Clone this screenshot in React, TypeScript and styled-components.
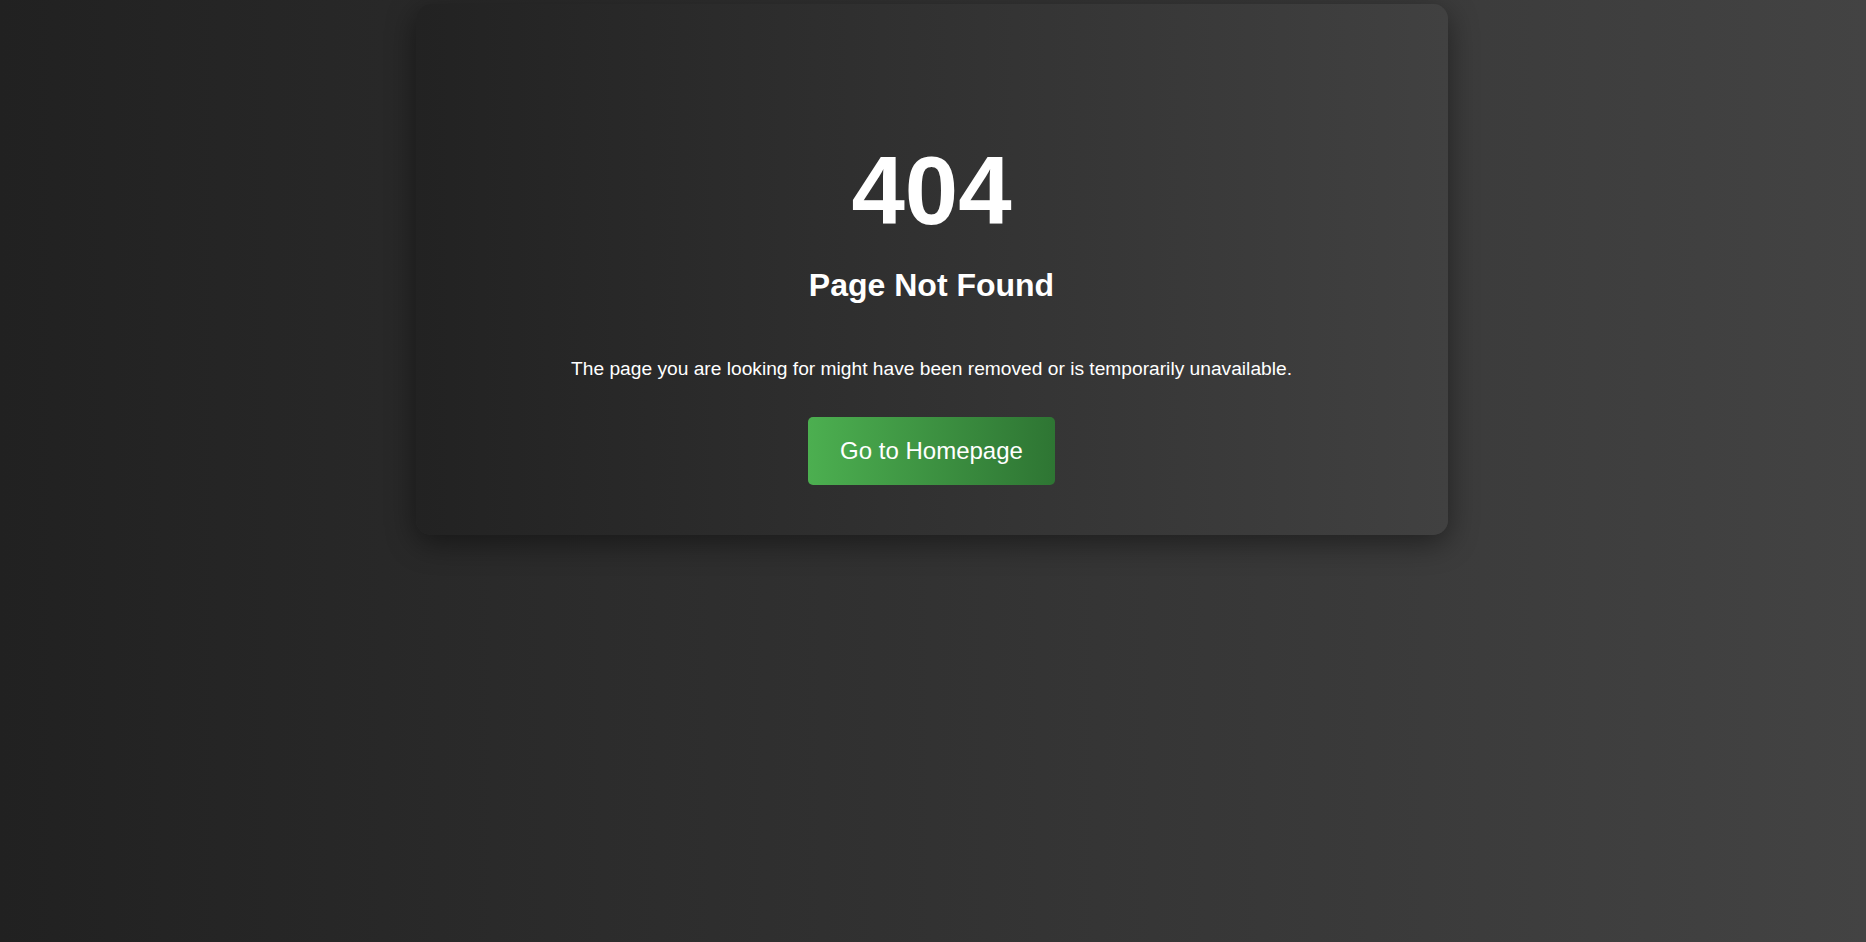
import React from "react";
import styled, { createGlobalStyle } from "styled-components";

const GlobalStyle = createGlobalStyle`
  html, body {
    margin: 0;
    padding: 0;
    height: 100%;
  }
  body {
    font-family: "Liberation Sans", Arial, sans-serif;
    background: linear-gradient(to right, #212121, #434343);
    color: #ffffff;
    min-height: 942px;
  }
`;

const Page = styled.main`
  display: flex;
  justify-content: center;
  align-items: flex-start;
  min-height: 942px;
  box-sizing: border-box;
  padding: 4px 3px 0 0;
`;

const Card = styled.section`
  width: 1032px;
  box-sizing: border-box;
  padding: 50px 40px;
  border-radius: 15px;
  background: linear-gradient(to right, #222222, #414141);
  box-shadow: 0 8px 30px rgba(0, 0, 0, 0.45);
  display: flex;
  flex-direction: column;
  align-items: center;
  text-align: center;
`;

const Code = styled.h1`
  margin: 82px 0 21px;
  font-size: 96px;
  font-weight: 700;
  line-height: normal;
  color: #ffffff;
`;

const Title = styled.h2`
  margin: 0 0 54px;
  font-size: 32px;
  font-weight: 700;
  line-height: normal;
  color: #ffffff;
`;

const Message = styled.p`
  margin: 0 0 37px;
  font-size: 19.2px;
  line-height: normal;
  color: #ffffff;
`;

const HomeButton = styled.a`
  display: inline-block;
  padding: 20px 32px;
  font-size: 24px;
  line-height: normal;
  color: #ffffff;
  text-decoration: none;
  border-radius: 5px;
  background: linear-gradient(to right, #4caf50, #2e7533);
  cursor: pointer;
`;

export default function App() {
  return (
    <>
      <GlobalStyle />
      <Page>
        <Card>
          <Code>404</Code>
          <Title>Page Not Found</Title>
          <Message>
            The page you are looking for might have been removed or is temporarily unavailable.
          </Message>
          <HomeButton href="#">Go to Homepage</HomeButton>
        </Card>
      </Page>
    </>
  );
}
